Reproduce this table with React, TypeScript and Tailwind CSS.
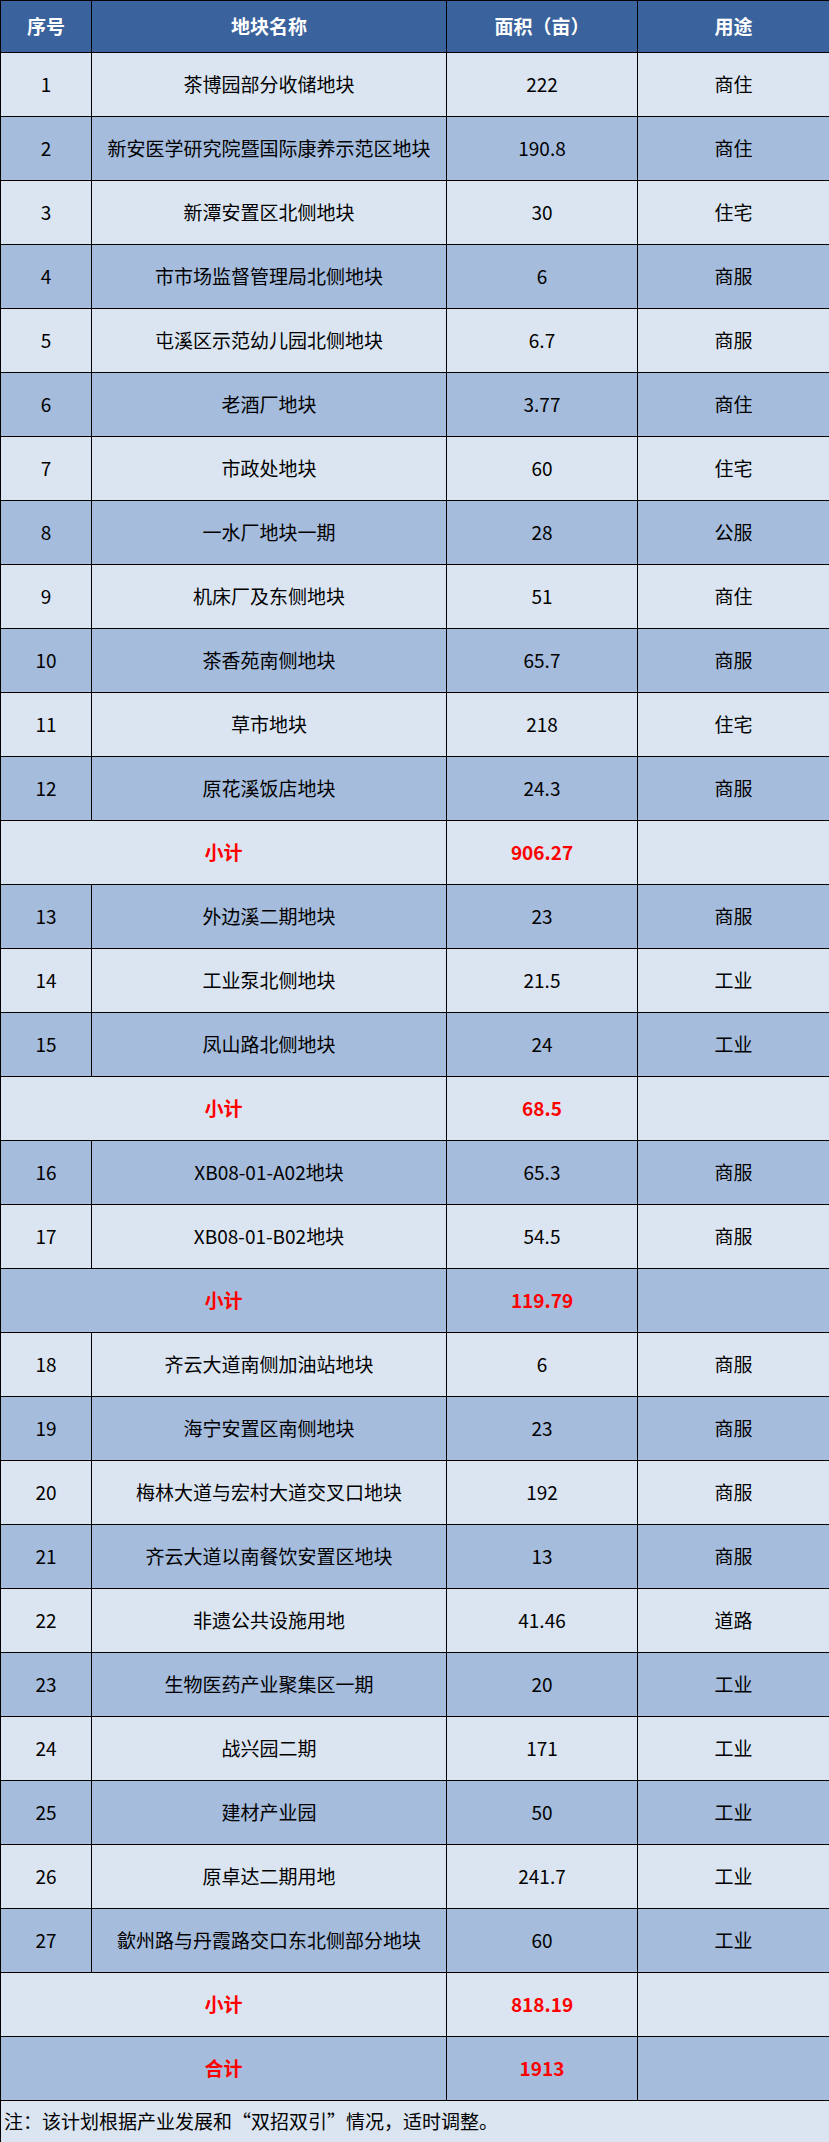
type Row =
  | { kind: "item"; no: number; name: string; area: string; use: string }
  | { kind: "sum"; label: string; area: string };

const rows: Row[] = [
  { kind: "item", no: 1, name: "茶博园部分收储地块", area: "222", use: "商住" },
  { kind: "item", no: 2, name: "新安医学研究院暨国际康养示范区地块", area: "190.8", use: "商住" },
  { kind: "item", no: 3, name: "新潭安置区北侧地块", area: "30", use: "住宅" },
  { kind: "item", no: 4, name: "市市场监督管理局北侧地块", area: "6", use: "商服" },
  { kind: "item", no: 5, name: "屯溪区示范幼儿园北侧地块", area: "6.7", use: "商服" },
  { kind: "item", no: 6, name: "老酒厂地块", area: "3.77", use: "商住" },
  { kind: "item", no: 7, name: "市政处地块", area: "60", use: "住宅" },
  { kind: "item", no: 8, name: "一水厂地块一期", area: "28", use: "公服" },
  { kind: "item", no: 9, name: "机床厂及东侧地块", area: "51", use: "商住" },
  { kind: "item", no: 10, name: "茶香苑南侧地块", area: "65.7", use: "商服" },
  { kind: "item", no: 11, name: "草市地块", area: "218", use: "住宅" },
  { kind: "item", no: 12, name: "原花溪饭店地块", area: "24.3", use: "商服" },
  { kind: "sum", label: "小计", area: "906.27" },
  { kind: "item", no: 13, name: "外边溪二期地块", area: "23", use: "商服" },
  { kind: "item", no: 14, name: "工业泵北侧地块", area: "21.5", use: "工业" },
  { kind: "item", no: 15, name: "凤山路北侧地块", area: "24", use: "工业" },
  { kind: "sum", label: "小计", area: "68.5" },
  { kind: "item", no: 16, name: "XB08-01-A02地块", area: "65.3", use: "商服" },
  { kind: "item", no: 17, name: "XB08-01-B02地块", area: "54.5", use: "商服" },
  { kind: "sum", label: "小计", area: "119.79" },
  { kind: "item", no: 18, name: "齐云大道南侧加油站地块", area: "6", use: "商服" },
  { kind: "item", no: 19, name: "海宁安置区南侧地块", area: "23", use: "商服" },
  { kind: "item", no: 20, name: "梅林大道与宏村大道交叉口地块", area: "192", use: "商服" },
  { kind: "item", no: 21, name: "齐云大道以南餐饮安置区地块", area: "13", use: "商服" },
  { kind: "item", no: 22, name: "非遗公共设施用地", area: "41.46", use: "道路" },
  { kind: "item", no: 23, name: "生物医药产业聚集区一期", area: "20", use: "工业" },
  { kind: "item", no: 24, name: "战兴园二期", area: "171", use: "工业" },
  { kind: "item", no: 25, name: "建材产业园", area: "50", use: "工业" },
  { kind: "item", no: 26, name: "原卓达二期用地", area: "241.7", use: "工业" },
  { kind: "item", no: 27, name: "歙州路与丹霞路交口东北侧部分地块", area: "60", use: "工业" },
  { kind: "sum", label: "小计", area: "818.19" },
  { kind: "sum", label: "合计", area: "1913" },
];

const cell = "border border-black text-center align-middle";

export default function App() {
  return (
    <div className="w-[829px] font-['Noto_Sans_CJK_SC','Noto_Sans',sans-serif] text-[19px] text-black">
      <table className="w-full table-fixed border-collapse">
        <colgroup>
          <col className="w-[91px]" />
          <col className="w-[355px]" />
          <col className="w-[191px]" />
          <col className="w-[192px]" />
        </colgroup>
        <thead>
          <tr className="h-[52px] bg-[#3a629c] text-white font-bold">
            <th className={cell}>序号</th>
            <th className={cell}>地块名称</th>
            <th className={cell}>面积（亩）</th>
            <th className={cell}>用途</th>
          </tr>
        </thead>
        <tbody>
          {rows.map((r, i) => (
            <tr
              key={i}
              className={`h-[64px] ${i % 2 === 0 ? "bg-[#dbe5f1]" : "bg-[#a5bcdd]"}`}
            >
              {r.kind === "item" ? (
                <>
                  <td className={cell}>{r.no}</td>
                  <td className={cell}>{r.name}</td>
                  <td className={cell}>{r.area}</td>
                  <td className={cell}>{r.use}</td>
                </>
              ) : (
                <>
                  <td colSpan={2} className={`${cell} font-bold text-[#ff0000]`}>
                    {r.label}
                  </td>
                  <td className={`${cell} font-bold text-[#ff0000]`}>{r.area}</td>
                  <td className={cell} />
                </>
              )}
            </tr>
          ))}
          <tr className="h-[42px] bg-[#dbe5f1]">
            <td colSpan={4} className="border border-black px-[3px] text-left align-middle">
              注：该计划根据产业发展和“双招双引”情况，适时调整。
            </td>
          </tr>
        </tbody>
      </table>
    </div>
  );
}
